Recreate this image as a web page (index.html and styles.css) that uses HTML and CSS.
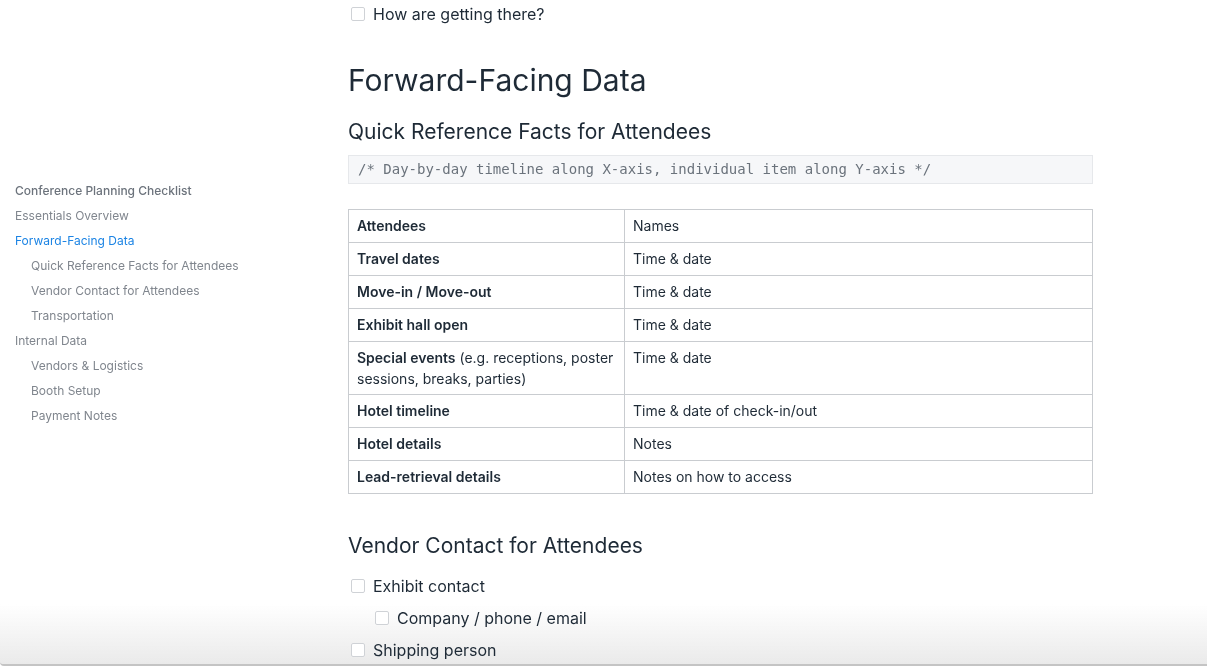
FILE: index.html
```html
<!DOCTYPE html>
<html lang="en">
<head>
<meta charset="utf-8">
<title>Conference Planning Checklist</title>
<link rel="stylesheet" href="styles.css">
</head>
<body>
<div class="bottom-fade"></div>
<div class="page">
  <nav class="toc">
    <a class="toc-item toc-title">Conference Planning Checklist</a>
    <a class="toc-item">Essentials Overview</a>
    <a class="toc-item active">Forward-Facing Data</a>
    <a class="toc-item sub">Quick Reference Facts for Attendees</a>
    <a class="toc-item sub">Vendor Contact for Attendees</a>
    <a class="toc-item sub">Transportation</a>
    <a class="toc-item">Internal Data</a>
    <a class="toc-item sub">Vendors &amp; Logistics</a>
    <a class="toc-item sub">Booth Setup</a>
    <a class="toc-item sub">Payment Notes</a>
  </nav>
  <main class="doc">
    <ul class="checklist first">
      <li><span class="box"></span>How are getting there?</li>
    </ul>
    <h1 class="h1">Forward-Facing Data</h1>
    <h2 class="h2">Quick Reference Facts for Attendees</h2>
    <pre class="code">/* Day-by-day timeline along X-axis, individual item along Y-axis */</pre>
    <table class="facts">
      <tr><td class="k"><b>Attendees</b></td><td class="v">Names</td></tr>
      <tr><td class="k"><b>Travel dates</b></td><td class="v">Time &amp; date</td></tr>
      <tr><td class="k"><b>Move-in / Move-out</b></td><td class="v">Time &amp; date</td></tr>
      <tr><td class="k"><b>Exhibit hall open</b></td><td class="v">Time &amp; date</td></tr>
      <tr class="tall"><td class="k"><b>Special events</b> (e.g. receptions, poster sessions, breaks, parties)</td><td class="v">Time &amp; date</td></tr>
      <tr><td class="k"><b>Hotel timeline</b></td><td class="v">Time &amp; date of check-in/out</td></tr>
      <tr><td class="k"><b>Hotel details</b></td><td class="v">Notes</td></tr>
      <tr><td class="k"><b>Lead-retrieval details</b></td><td class="v">Notes on how to access</td></tr>
    </table>
    <h2 class="h2 vendor">Vendor Contact for Attendees</h2>
    <ul class="checklist">
      <li><span class="box"></span>Exhibit contact</li>
      <li class="indent"><span class="box"></span>Company / phone / email</li>
      <li><span class="box"></span>Shipping person</li>
    </ul>
  </main>
</div>
</body>
</html>
```
FILE: styles.css
```css
html, body {
  margin: 0;
  padding: 0;
  background: #fff;
}
body {
  font-family: Inter, Roboto, "Liberation Sans", Arial, sans-serif;
  color: #1e2a36;
  height: 666px;
  overflow: hidden;
}
.page {
  display: flex;
  position: relative;
  z-index: 1;
}
.toc {
  width: 333px;
  padding: 178px 0 0 15px;
  display: flex;
  flex-direction: column;
  flex-shrink: 0;
}
.toc-item {
  font-size: 12px;
  line-height: 25px;
  color: #80868e;
  white-space: nowrap;
}
.toc-title {
  font-weight: 500;
  color: #6c737c;
}
.toc-item.active {
  color: #1c84e4;
}
.toc-item.sub {
  padding-left: 16px;
}
.doc {
  width: 745px;
}
.checklist {
  list-style: none;
  margin: 0;
  padding: 0;
}
.checklist li {
  display: flex;
  align-items: center;
  font-size: 16px;
  height: 32px;
  color: #1e2a36;
}
.checklist.first li {
  height: 27px;
}
.checklist li.indent {
  padding-left: 24px;
}
.box {
  width: 12px;
  height: 12px;
  border: 1px solid #cfd2d6;
  border-radius: 2px;
  margin: 0 8px 0 3px;
  background: #fff;
}
.h1 {
  font-size: 30px;
  font-weight: 400;
  margin: 33px 0 0 0;
  line-height: 40px;
  color: #1e2a36;
}
.h2 {
  font-size: 21px;
  font-weight: 400;
  line-height: 28px;
  margin: 18px 0 0 0;
  color: #1e2a36;
}
.code {
  margin: 9px 0 0 0;
  background: #f6f7f9;
  border: 1px solid #e6e8eb;
  font-family: "DejaVu Sans Mono", "Liberation Mono", monospace;
  font-size: 14px;
  line-height: 27px;
  padding: 0 9px;
  color: #6b737c;
}
.facts {
  margin-top: 25px;
  width: 745px;
  border-collapse: collapse;
  font-size: 14px;
  color: #1e2a36;
}
.facts td {
  border: 1px solid #c9ccd0;
  padding: 5px 8px 6px 8px;
  line-height: 21px;
  vertical-align: top;
}
.facts tr.tall td {
  padding-bottom: 5px;
  padding-top: 5px;
}
.facts td.k {
  width: 259px;
}
.facts b {
  font-weight: 600;
}
.h2.vendor {
  margin-top: 38px;
  margin-bottom: 10px;
}
.bottom-fade {
  position: fixed;
  left: 0;
  right: 0;
  bottom: 0;
  height: 60px;
  z-index: 0;
  background: linear-gradient(to bottom, rgba(236,236,236,0), rgba(234,234,234,1));
  border-bottom: 2px solid #c4c4c4;
  border-bottom-left-radius: 4px;
}
```
